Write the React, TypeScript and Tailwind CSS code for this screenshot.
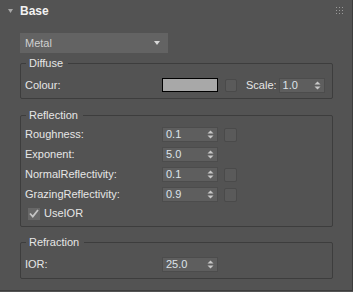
import React from "react";

// petit spinner numérique façon 3ds Max
const Spinner = ({ value, width = 56 }: { value: string; width?: number }) => (
  <div
    className="h-[15px] bg-[#5e5e5e] border border-[#4c4c4c] flex items-center justify-between pl-[3px] pr-[3px] text-[#dde3ea]"
    style={{ width }}
  >
    <span className="leading-none">{value}</span>
    <svg width="7" height="9" viewBox="0 0 7 9" className="shrink-0">
      <path d="M3.5 0.5 L6.5 3.5 L0.5 3.5 Z" fill="#c8c8c8" />
      <path d="M0.5 5.5 L6.5 5.5 L3.5 8.5 Z" fill="#c8c8c8" />
    </svg>
  </div>
);

const Square = () => (
  <div className="w-[13px] h-[14px] rounded-[2px] bg-[#5a5a5a] border border-[#4a4a4a]" />
);

const Group = ({
  title,
  className,
  children,
}: {
  title: string;
  className: string;
  children: React.ReactNode;
}) => (
  <fieldset
    className={`ml-[20px] w-[313px] border border-[#3d3d3d] rounded-[2px] pl-[4px] ${className}`}
  >
    <legend className="ml-[1px] pl-[3px] pr-[5px] h-[14px] leading-[14px] text-[#e6e6e6]">
      {title}
    </legend>
    {children}
  </fieldset>
);

const Row = ({ label, value, check }: { label: string; value: string; check?: boolean }) => (
  <div className="flex items-center h-[15px]">
    <span className="w-[137px] text-[#e6e6e6]">{label}</span>
    <Spinner value={value} />
    {check && (
      <div className="ml-[6px]">
        <Square />
      </div>
    )}
  </div>
);

export default function App() {
  return (
    <div
      className="w-[353px] h-[292px] bg-[#535353] text-[11px]"
      style={{ fontFamily: '"Liberation Sans", Arial, sans-serif' }}
    >
      <div className="relative w-[353px] h-[291px] border-r border-b border-[#3c3c3c]">
        {/* en-tête */}
        <div className="h-[22px] flex items-center pl-[8px]">
          <svg width="5" height="4" viewBox="0 0 5 4">
            <path d="M0 0 L5 0 L2.5 4 Z" fill="#a8a8a8" />
          </svg>
          <span className="ml-[7px] text-[12px] font-bold text-[#f2f2f2]">Base</span>
        </div>
        <svg width="7" height="7" viewBox="0 0 7 7" className="absolute right-[9px] top-[7px]">
          {[0, 3, 6].map((y) =>
            [0, 3, 6].map((x) => (
              <rect key={`${x}-${y}`} x={x} y={y} width="1" height="1" fill="#9a9a9a" />
            ))
          )}
        </svg>

        {/* liste déroulante */}
        <div className="mt-[11px] ml-[20px] w-[148px] h-[20px] bg-[#636363] flex items-center justify-between pl-[5px] pr-[8px] text-[#d0d0d0]">
          <span>Metal</span>
          <svg width="6" height="4" viewBox="0 0 6 4">
            <path d="M0 0 L6 0 L3 4 Z" fill="#d8d8d8" />
          </svg>
        </div>

        <Group title="Diffuse" className="mt-[3px] pt-[8px] pb-[6px]">
          <div className="flex items-center h-[14px]">
            <span className="w-[137px] text-[#e6e6e6]">Colour:</span>
            <div className="w-[56px] h-[14px] bg-[#a8a8a8] border border-black" />
            <div className="ml-[7px] w-[12px] h-[13px] rounded-[2px] bg-[#5a5a5a] border border-[#4a4a4a]" />
            <span className="ml-[9px] text-[#e6e6e6]">Scale:</span>
            <div className="ml-[2px]">
              <Spinner value="1.0" width={46} />
            </div>
          </div>
        </Group>

        <Group title="Reflection" className="mt-[9px] pt-[5px] pb-[6px]">
          <div className="flex flex-col gap-[5px]">
            <Row label="Roughness:" value="0.1" check />
            <Row label="Exponent:" value="5.0" />
            <Row label="NormalReflectivity:" value="0.1" check />
            <Row label="GrazingReflectivity:" value="0.9" check />
            <div className="flex items-center h-[13px] pl-[3px]">
              <div className="w-[12px] h-[12px] bg-[#676767] flex items-center justify-center">
                <svg width="10" height="9" viewBox="0 0 10 9">
                  <path d="M1 4.5 L3.8 7.5 L9 1" stroke="#c4c4c4" strokeWidth="1.8" fill="none" />
                </svg>
              </div>
              <span className="ml-[4px] text-[#e6e6e6]">UseIOR</span>
            </div>
          </div>
        </Group>

        <Group title="Refraction" className="mt-[8px] pt-[8px] pb-[6px]">
          <Row label="IOR:" value="25.0" />
        </Group>
      </div>
    </div>
  );
}
